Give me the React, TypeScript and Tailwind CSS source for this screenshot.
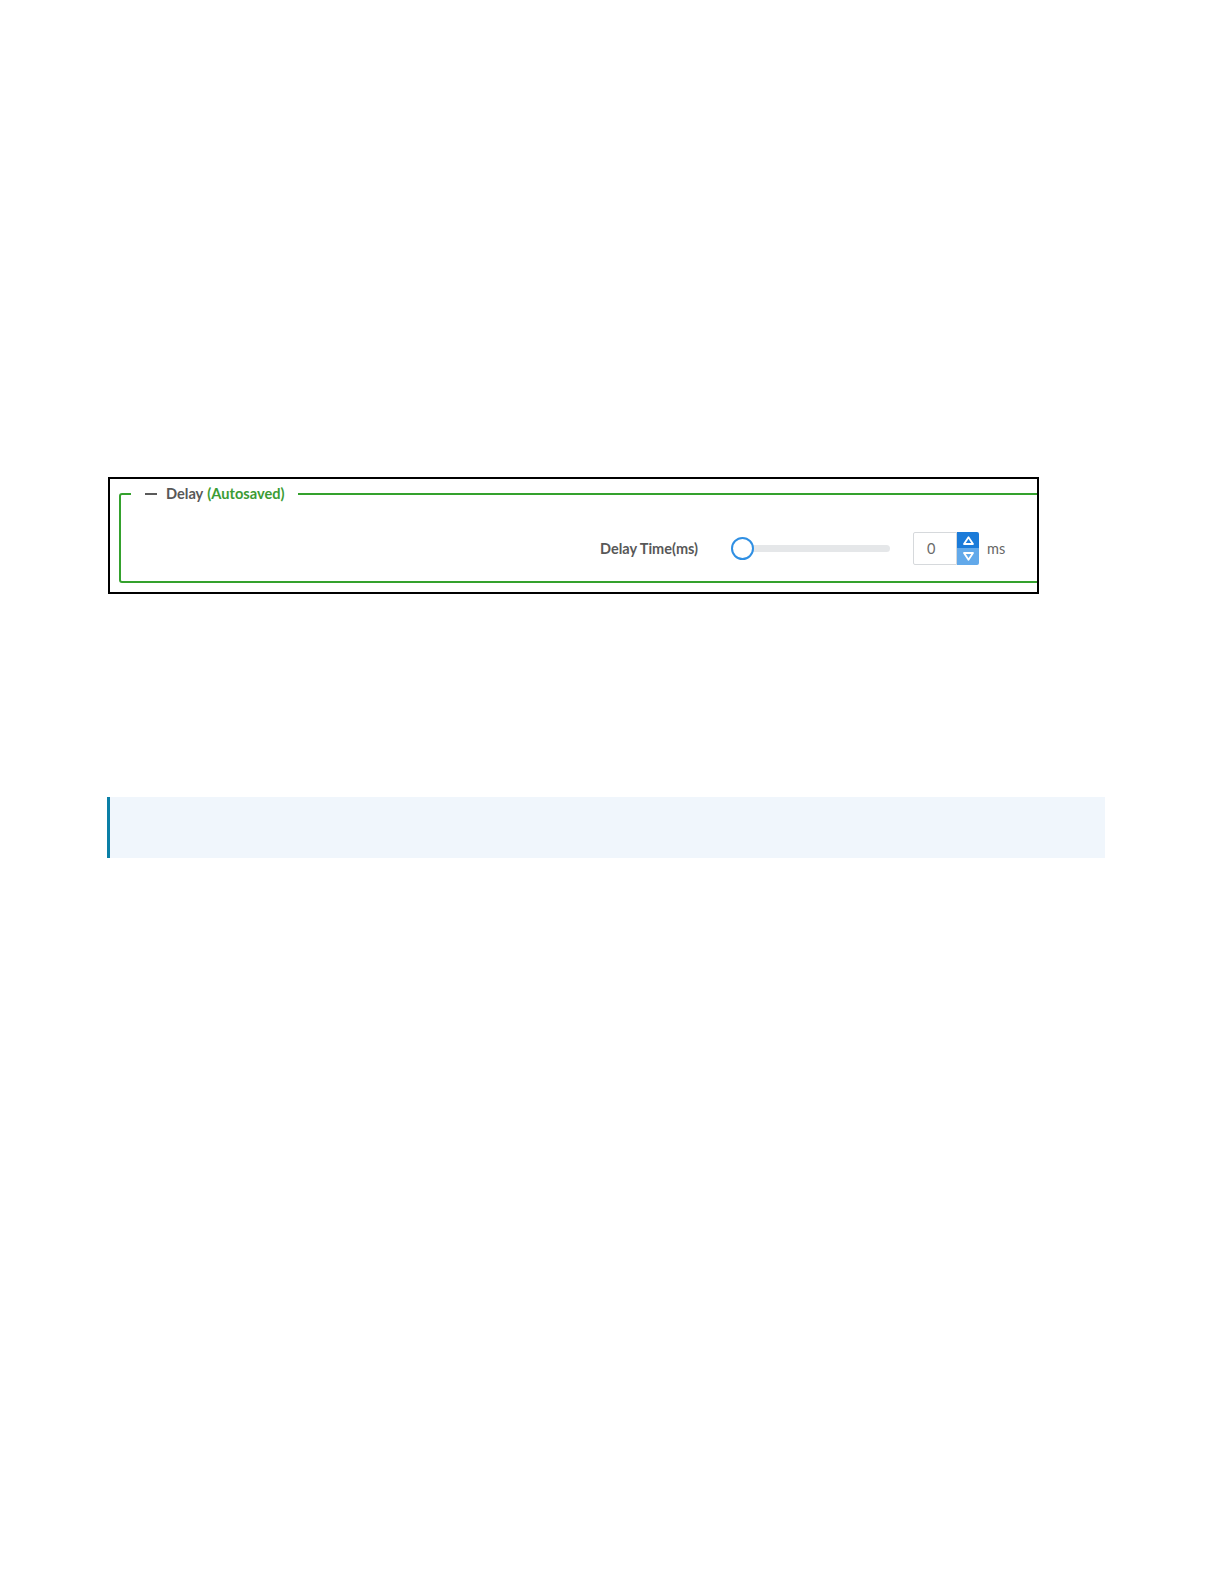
import React from "react";

function UpTri() {
  return (
    <svg width="11" height="9" viewBox="0 0 11 9" fill="none">
      <path d="M5.5 1.2 L10 8 L1 8 Z" stroke="white" strokeWidth="1.8" strokeLinejoin="round" />
    </svg>
  );
}
function DownTri() {
  return (
    <svg width="11" height="9" viewBox="0 0 11 9" fill="none">
      <path d="M1 1 L10 1 L5.5 7.8 Z" stroke="white" strokeWidth="1.8" strokeLinejoin="round" />
    </svg>
  );
}

export default function App() {
  return (
    <div className="w-[1224px] h-[1584px] bg-white" style={{ fontFamily: "Lato, 'Open Sans', sans-serif" }}>
      <div className="pt-[477px] pl-[108px]">
        <div className="w-[931px] h-[117px] border-2 border-black overflow-hidden bg-white">
          <fieldset className="ml-[9px] mt-[5px] w-[980px] h-[99px] border-2 border-[#34a12d] rounded-[3px] px-[10px] pt-[28px]">
            <legend className="px-[14px] h-[20px]">
              <div className="flex items-center h-[20px]">
                <div className="w-[12px] h-[2px] bg-[#5a5a5a]" />
                <span className="ml-[9px] text-[14.6px] font-bold text-[#585858] leading-[20px]">Delay</span>
                <span className="ml-[4px] text-[14.6px] font-bold text-[#3b9c34] leading-[20px]">(Autosaved)</span>
              </div>
            </legend>
            <div className="flex items-center h-[33px] ml-[469px]">
              <span className="text-[14.5px] font-bold text-[#585858] leading-[20px] w-[98px] whitespace-nowrap">Delay Time(ms)</span>
              <div className="relative ml-[33px] w-[159px] h-[23px]">
                <div className="absolute left-[11px] right-0 top-[8px] h-[7px] rounded-full bg-[#e5e7e9]" />
                <div className="absolute left-0 top-0 w-[23px] h-[23px] rounded-full border-[2.5px] border-[#2f8fe3] bg-white" />
              </div>
              <div className="ml-[23px] flex h-[33px]">
                <div className="w-[44px] h-[33px] border border-[#d6d9dc] rounded-l-[2px] flex items-center pl-[13px] text-[14.5px] text-[#6a6a6a]">
                  0
                </div>
                <div className="w-[22px] h-[33px] flex flex-col rounded-r-[2px] overflow-hidden">
                  <div className="h-[16px] bg-[#1b7bd9] flex items-center justify-center">
                    <UpTri />
                  </div>
                  <div className="h-[17px] bg-[#62a9ea] flex items-center justify-center">
                    <DownTri />
                  </div>
                </div>
              </div>
              <span className="ml-[8px] text-[14.5px] text-[#666666]">ms</span>
            </div>
          </fieldset>
        </div>
      </div>
      <div className="mt-[203px] ml-[107px] w-[998px] h-[61px] bg-[#f0f6fc] border-l-[3px] border-[#0a7fa6]" />
    </div>
  );
}
